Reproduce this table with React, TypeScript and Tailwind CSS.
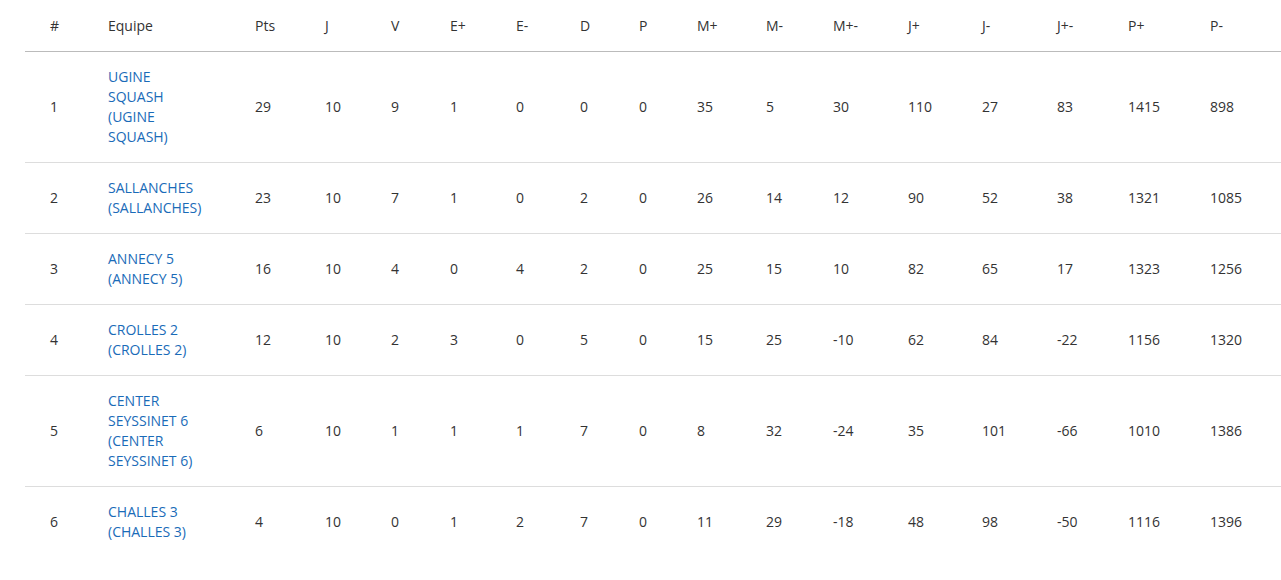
import React from "react";

type Row = {
  rank: number;
  team: string[];
  stats: (string | number)[];
};

const headers = ["#", "Equipe", "Pts", "J", "V", "E+", "E-", "D", "P", "M+", "M-", "M+-", "J+", "J-", "J+-", "P+", "P-"];

const widths = [58, 147, 70, 66, 59, 66, 64, 59, 58, 69, 67, 75, 74, 75, 71, 82, 96];

const rows: Row[] = [
  { rank: 1, team: ["UGINE", "SQUASH", "(UGINE", "SQUASH)"], stats: [29, 10, 9, 1, 0, 0, 0, 35, 5, 30, 110, 27, 83, 1415, 898] },
  { rank: 2, team: ["SALLANCHES", "(SALLANCHES)"], stats: [23, 10, 7, 1, 0, 2, 0, 26, 14, 12, 90, 52, 38, 1321, 1085] },
  { rank: 3, team: ["ANNECY 5", "(ANNECY 5)"], stats: [16, 10, 4, 0, 4, 2, 0, 25, 15, 10, 82, 65, 17, 1323, 1256] },
  { rank: 4, team: ["CROLLES 2", "(CROLLES 2)"], stats: [12, 10, 2, 3, 0, 5, 0, 15, 25, -10, 62, 84, -22, 1156, 1320] },
  { rank: 5, team: ["CENTER", "SEYSSINET 6", "(CENTER", "SEYSSINET 6)"], stats: [6, 10, 1, 1, 1, 7, 0, 8, 32, -24, 35, 101, -66, 1010, 1386] },
  { rank: 6, team: ["CHALLES 3", "(CHALLES 3)"], stats: [4, 10, 0, 1, 2, 7, 0, 11, 29, -18, 48, 98, -50, 1116, 1396] },
];

export default function App() {
  return (
    <div className="bg-white min-h-[580px] pl-[25px] text-[14px] leading-[20px] text-[#333] font-['Open_Sans',sans-serif]">
      <table className="table-fixed border-collapse w-[1256px] text-left">
        <colgroup>
          {widths.map((w, i) => (
            <col key={i} style={{ width: w }} />
          ))}
        </colgroup>
        <thead>
          <tr className="border-b border-[#bbb]">
            {headers.map((h) => (
              <th key={h} className="font-normal pl-[25px] pr-0 pt-[16px] pb-[15px] align-middle">
                {h}
              </th>
            ))}
          </tr>
        </thead>
        <tbody>
          {rows.map((r) => (
            <tr key={r.rank} className="border-b border-[#ddd] last:border-b-0">
              <td className="pl-[25px] py-[15px] align-middle">{r.rank}</td>
              <td className="pl-[25px] py-[15px] align-middle">
                <a href="#" className="text-[#1a6bb8] block">
                  {r.team.map((t, i) => (
                    <span key={i} className="block whitespace-nowrap">
                      {t}
                    </span>
                  ))}
                </a>
              </td>
              {r.stats.map((s, i) => (
                <td key={i} className="pl-[25px] py-[15px] align-middle">
                  {s}
                </td>
              ))}
            </tr>
          ))}
        </tbody>
      </table>
    </div>
  );
}
